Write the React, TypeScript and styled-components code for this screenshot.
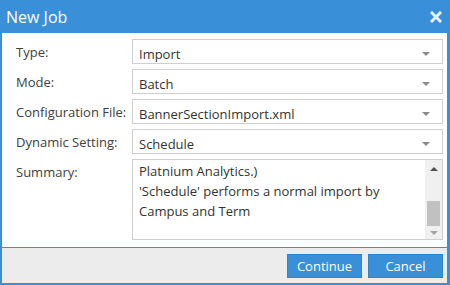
import styled, { createGlobalStyle } from "styled-components";

const GlobalStyle = createGlobalStyle`
  html, body {
    margin: 0;
    padding: 0;
    background: #ffffff;
  }
  body {
    font-family: "Open Sans", "DejaVu Sans", sans-serif;
  }
`;

const Window = styled.div`
  width: 450px;
  height: 285px;
  box-sizing: border-box;
  background: #3a8fd9;
  padding: 0 3px 2px 2px;
  display: flex;
  flex-direction: column;
`;

const TitleBar = styled.div`
  height: 33px;
  display: flex;
  align-items: center;
  justify-content: space-between;
  padding: 0 5px 0 4px;
  color: #ffffff;
  font-size: 16px;
`;

const CloseButton = styled.button`
  width: 12px;
  height: 12px;
  padding: 0;
  border: none;
  background: none;
  display: flex;
  cursor: pointer;
`;

const Body = styled.div`
  background: #ffffff;
  padding: 6px 4px 6px 14px;
  display: flex;
  flex-direction: column;
  gap: 5px;
  flex: 1;
`;

const Row = styled.div<{ $tall?: boolean }>`
  display: flex;
  align-items: flex-start;
  height: ${(p) => (p.$tall ? "81px" : "25px")};
`;

const Label = styled.div`
  width: 116px;
  padding-top: 4px;
  font-size: 13px;
  line-height: 18px;
  color: #404040;
`;

const Select = styled.div`
  flex: 1;
  height: 25px;
  box-sizing: border-box;
  border: 1px solid #cfcfcf;
  padding: 5px 12px 0 6px;
  display: flex;
  justify-content: space-between;
  font-size: 13px;
  line-height: 18px;
  color: #333333;
`;

const Caret = styled.span`
  width: 0;
  height: 0;
  margin-top: 7px;
  border-left: 4px solid transparent;
  border-right: 4px solid transparent;
  border-top: 4px solid #8a8a8a;
`;

const SummaryBox = styled.div`
  flex: 1;
  height: 81px;
  box-sizing: border-box;
  border: 1px solid #cfcfcf;
  display: flex;
`;

const SummaryText = styled.div`
  flex: 1;
  padding: 1px 6px 0 6px;
  font-size: 13px;
  line-height: 20px;
  color: #333333;
  overflow: hidden;
`;

const Scrollbar = styled.div`
  width: 17px;
  background: #f0f0f0;
  display: flex;
  flex-direction: column;
`;

const ScrollArrow = styled.div<{ $down?: boolean }>`
  height: ${(p) => (p.$down ? "13px" : "17px")};
  display: flex;
  align-items: center;
  justify-content: center;

  &::before {
    content: "";
    width: 0;
    height: 0;
    border-left: 4px solid transparent;
    border-right: 4px solid transparent;
    ${(p) =>
      p.$down
        ? "border-top: 4px solid #a3a3a3;"
        : "border-bottom: 4px solid #505050;"}
  }
`;

const Track = styled.div`
  flex: 1;
  display: flex;
  flex-direction: column;
  justify-content: flex-end;
  padding: 0 2px;
`;

const Thumb = styled.div`
  height: 25px;
  background: #c1c1c1;
`;

const Footer = styled.div`
  height: 35px;
  box-sizing: border-box;
  margin-top: 1px;
  background: #ececec;
  padding: 6px 4px 0 0;
  display: flex;
  justify-content: flex-end;
  gap: 6px;
`;

const Button = styled.button`
  width: 75px;
  height: 24px;
  box-sizing: border-box;
  border: 1px solid #2f82cc;
  background: #3a8fd9;
  color: #ffffff;
  font-family: "Open Sans", "DejaVu Sans", sans-serif;
  font-size: 13px;
  padding: 0;
  cursor: pointer;
`;

const fields = [
  { label: "Type:", value: "Import" },
  { label: "Mode:", value: "Batch" },
  { label: "Configuration File:", value: "BannerSectionImport.xml" },
  { label: "Dynamic Setting:", value: "Schedule" },
];

const summaryLines = [
  "Platnium Analytics.)",
  "'Schedule' performs a normal import by",
  "Campus and Term",
];

const App = () => {
  return (
    <>
      <GlobalStyle />
      <Window>
        <TitleBar>
          <span>New Job</span>
          <CloseButton aria-label="Close">
            <svg width="12" height="12" viewBox="0 0 12 12">
              <path
                d="M2 2 L10 10 M10 2 L2 10"
                stroke="#e6f1fb"
                strokeWidth="3"
                strokeLinecap="square"
              />
            </svg>
          </CloseButton>
        </TitleBar>
        <Body>
          {fields.map((field) => (
            <Row key={field.label}>
              <Label>{field.label}</Label>
              <Select>
                <span>{field.value}</span>
                <Caret />
              </Select>
            </Row>
          ))}
          <Row $tall>
            <Label>Summary:</Label>
            <SummaryBox>
              <SummaryText>
                {summaryLines.map((line) => (
                  <div key={line}>{line}</div>
                ))}
              </SummaryText>
              <Scrollbar>
                <ScrollArrow />
                <Track>
                  <Thumb />
                </Track>
                <ScrollArrow $down />
              </Scrollbar>
            </SummaryBox>
          </Row>
        </Body>
        <Footer>
          <Button>Continue</Button>
          <Button>Cancel</Button>
        </Footer>
      </Window>
    </>
  );
};

export default App;
